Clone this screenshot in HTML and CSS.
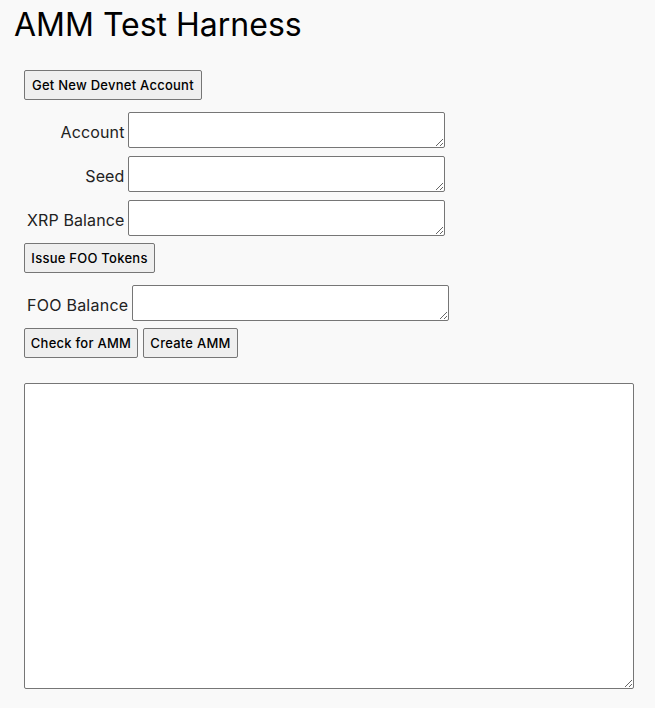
FILE: index.html
```html
<!DOCTYPE html>
<html>
<head>
<meta charset="utf-8">
<title>AMM Test Harness</title>
<link rel="stylesheet" href="styles.css">
</head>
<body>
<h1 class="title">AMM Test Harness</h1>
<main class="panel">
  <button class="btn btn-first">Get New Devnet Account</button>
  <div class="fields">
    <label class="lbl" for="account">Account</label>
    <textarea class="field" id="account"></textarea>
    <label class="lbl" for="seed">Seed</label>
    <textarea class="field" id="seed"></textarea>
    <label class="lbl" for="xrp">XRP Balance</label>
    <textarea class="field" id="xrp"></textarea>
  </div>
  <button class="btn btn-issue">Issue FOO Tokens</button>
  <div class="fields fields-foo">
    <label class="lbl" for="foo">FOO Balance</label>
    <textarea class="field" id="foo"></textarea>
  </div>
  <div class="btn-row">
    <button class="btn btn-check">Check for AMM</button>
    <button class="btn btn-create">Create AMM</button>
  </div>
  <textarea class="results"></textarea>
</main>
</body>
</html>
```

FILE: styles.css
```css
html, body {
  margin: 0;
  padding: 0;
  background: #f9f9f9;
}
body {
  font-family: Inter, "Open Sans", sans-serif;
  color: #111;
}
.title {
  margin: 0;
  padding: 7px 0 0 14px;
  font-size: 32px;
  font-weight: 400;
  line-height: 36px;
  color: #000;
}
.panel {
  display: flex;
  flex-direction: column;
  align-items: flex-start;
  padding: 27px 0 0 24px;
}
.btn {
  font-family: Inter, "Open Sans", sans-serif;
  font-size: 13px;
  font-weight: 500;
  letter-spacing: 0.25px;
  white-space: nowrap;
  color: #000;
  background: #efefef;
  border: 1px solid #767676;
  border-radius: 2px;
  height: 30px;
  padding: 0 7px;
  margin: 0;
}
.btn-issue {
  margin-top: 7px;
  width: 131px;
  padding: 0;
}
.btn-check {
  width: 114px;
  padding: 0;
}
.btn-create {
  width: 95px;
  padding: 0;
}
.fields {
  display: grid;
  grid-template-columns: auto auto;
  column-gap: 4px;
  row-gap: 8px;
  align-items: center;
  padding-left: 3px;
  margin-top: 12px;
}
.fields-foo {
  margin-top: 12px;
}
.lbl {
  text-align: right;
  font-size: 16px;
  letter-spacing: 0.12px;
  padding-top: 3px;
  color: #222;
}
.fields-foo .lbl {
  letter-spacing: 0.25px;
}
.field {
  display: block;
  width: 317px;
  height: 36px;
  box-sizing: border-box;
  margin: 0;
  border: 1px solid #767676;
  border-radius: 2px;
  background: #fff;
}
.btn-row {
  display: flex;
  gap: 5px;
  margin-top: 7px;
}
.results {
  display: block;
  box-sizing: border-box;
  width: 610px;
  height: 306px;
  margin: 25px 0 0 0;
  border: 1px solid #767676;
  border-radius: 2px;
  background: #fff;
}
```
